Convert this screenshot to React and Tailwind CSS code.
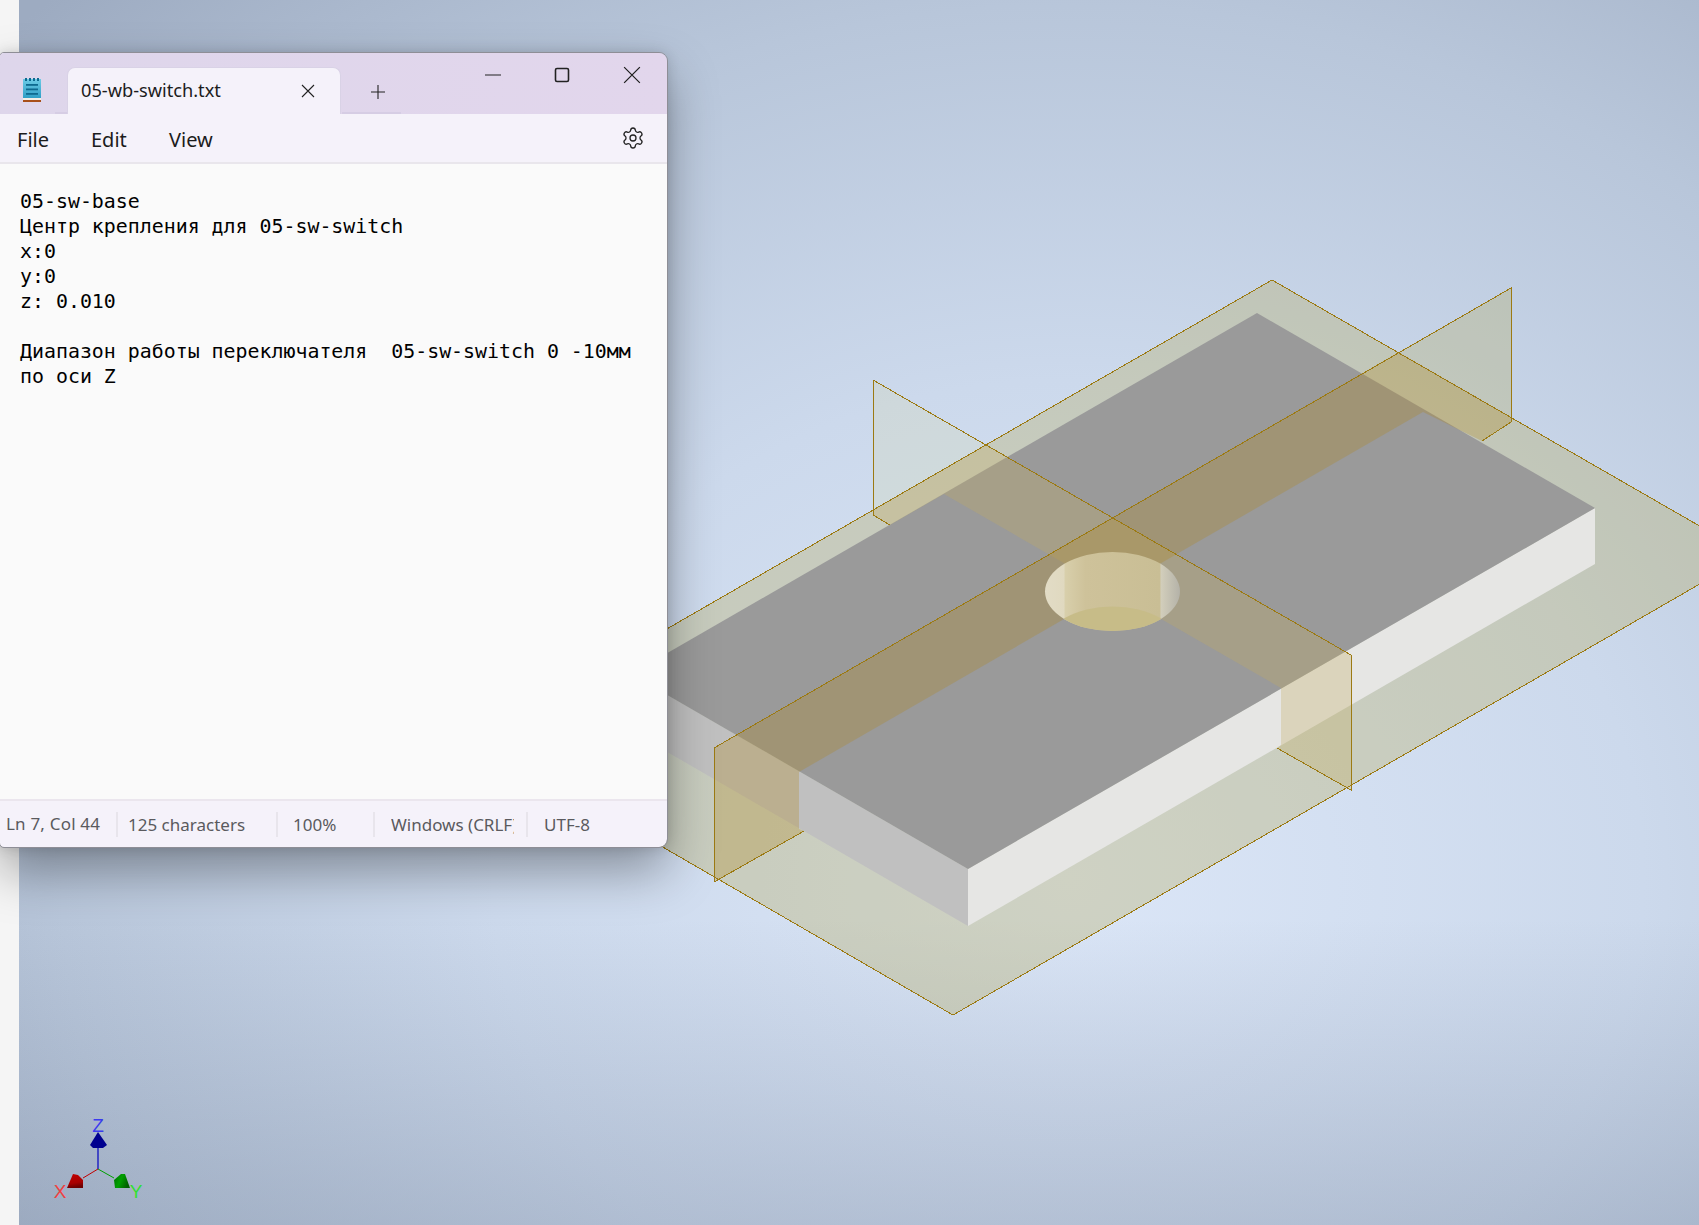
import React from "react";
import { Settings } from "lucide-react";

const scene = {
  base: "1272,280 1750,555 953,1015 476,739",
  top: "1257,313 1595,508 968,869 631,674",
  right: "1595,508 1595,564 968,926 968,869",
  left: "631,674 968,869 968,926 631,731",
  planeAIn: "714,748 1399,352 1511,417 1511,422 1482,441 1423,412 799,772 799,829 804,831 714,882",
  planeAOut: "1399,352 1511,288 1511,417",
  planeBIn: "986,445 1351,655 1351,790 1277,748 1281,745 1281,688 944,494 890,525 873,515 873,510",
  planeBOut: "873,380 986,445 873,510",
};

function Scene() {
  return (
    <svg className="absolute inset-0" width="1699" height="1225" viewBox="0 0 1699 1225">
      <defs>
        <linearGradient id="wall" x1="1045" x2="1180" y1="0" y2="0" gradientUnits="userSpaceOnUse">
          <stop offset="0" stopColor="#e2dcc6" />
          <stop offset="0.14" stopColor="#e0d9c0" />
          <stop offset="0.15" stopColor="#d8cfab" />
          <stop offset="0.3" stopColor="#cec29a" />
          <stop offset="0.85" stopColor="#c9be95" />
          <stop offset="0.86" stopColor="#d2cebb" />
          <stop offset="1" stopColor="#b4b2a8" />
        </linearGradient>
        <clipPath id="hole">
          <ellipse cx="1112.5" cy="591.5" rx="67.5" ry="39.5" />
        </clipPath>
      </defs>
      <polygon points={scene.base} fill="rgb(183,170,92)" fillOpacity="0.33" />
      <polygon points={scene.right} fill="#e6e6e4" />
      <polygon points={scene.left} fill="#c0c0c0" />
      <polygon points={scene.top} fill="#9a9a9a" />
      <polygon points={scene.planeBIn} fill="rgb(196,172,96)" fillOpacity="0.3" />
      <polygon points={scene.planeBOut} fill="rgb(216,214,160)" fillOpacity="0.22" />
      <polygon points={scene.planeAIn} fill="rgb(174,137,34)" fillOpacity="0.3" />
      <polygon points={scene.planeAOut} fill="rgb(180,170,90)" fillOpacity="0.3" />
      <g fill="none" stroke="#9c7a12" strokeWidth="1" shapeRendering="crispEdges">
        <polygon points={scene.base} />
        <polyline points="1482,441 1511,422 1511,288 714,748 714,882 804,831" />
        <polyline points="890,525 873,515 873,380 1351,655 1351,790 1277,748" />
      </g>
      <ellipse cx="1112.5" cy="591.5" rx="67.5" ry="39.5" fill="url(#wall)" />
      <g clipPath="url(#hole)">
        <ellipse cx="1112.5" cy="646" rx="67.5" ry="39.5" fill="#c7bc88" />
      </g>
    </svg>
  );
}

function Gizmo() {
  return (
    <svg className="absolute inset-0" width="1699" height="1225" viewBox="0 0 1699 1225">
      <defs>
        <linearGradient id="red" x1="0" y1="0" x2="0.2" y2="1">
          <stop offset="0" stopColor="#c20000" />
          <stop offset="0.7" stopColor="#a80000" />
          <stop offset="1" stopColor="#6e0000" />
        </linearGradient>
        <linearGradient id="green" x1="0" y1="0" x2="1" y2="0.4">
          <stop offset="0" stopColor="#006e00" />
          <stop offset="0.5" stopColor="#00a000" />
          <stop offset="1" stopColor="#006000" />
        </linearGradient>
      </defs>
      <line x1="98" y1="1169" x2="98" y2="1146" stroke="#0000c0" strokeWidth="1.2" />
      <line x1="98" y1="1169" x2="83" y2="1178" stroke="#c00000" strokeWidth="1" />
      <line x1="98" y1="1169" x2="114" y2="1178" stroke="#00a000" strokeWidth="1" />
      <polygon points="98,1132 107,1145 103,1148 93,1148 90,1145" fill="#00008f" />
      <polygon points="73,1174 78,1175 83,1180 83,1188 67,1188" fill="url(#red)" />
      <polygon points="121,1174 125,1174 130,1188 115,1188 114,1180" fill="url(#green)" />
      <text x="98" y="1132" textAnchor="middle" fontFamily="Liberation Sans" fontSize="19" fill="#3a3aee">Z</text>
      <text x="60" y="1198" textAnchor="middle" fontFamily="Liberation Sans" fontSize="19" fill="#f04040">X</text>
      <text x="136" y="1198" textAnchor="middle" fontFamily="Liberation Sans" fontSize="19" fill="#30e030">Y</text>
    </svg>
  );
}

function NotepadIcon() {
  return (
    <svg width="18" height="24" viewBox="0 0 18 24" className="shrink-0">
      <defs>
        <linearGradient id="pad" x1="0" y1="0" x2="0" y2="1">
          <stop offset="0" stopColor="#6ccbe6" />
          <stop offset="1" stopColor="#2f9fc6" />
        </linearGradient>
      </defs>
      <rect x="0" y="1" width="18" height="19" fill="url(#pad)" />
      <rect x="0" y="20" width="18" height="2" fill="#f2eee6" />
      <rect x="0" y="22" width="18" height="2" fill="#a8501a" />
      <g fill="#0e6a90">
        <rect x="2" y="0" width="2" height="3" />
        <rect x="6" y="0" width="2" height="3" />
        <rect x="10" y="0" width="2" height="3" />
        <rect x="14" y="0" width="2" height="3" />
        <rect x="3" y="6" width="12" height="1.8" />
        <rect x="3" y="10.5" width="12" height="1.8" />
        <rect x="3" y="15" width="12" height="1.8" />
      </g>
    </svg>
  );
}

function Glyph({ children, className }) {
  return (
    <svg width="16" height="16" viewBox="0 0 16 16" fill="none" stroke="#222" strokeWidth="1.1" className={className}>
      {children}
    </svg>
  );
}

function Notepad() {
  return (
    <div className="absolute left-0 top-[53px] w-[667px] h-[794px] flex flex-col rounded-r-lg rounded-l-[4px] overflow-hidden shadow-[0_24px_50px_rgba(0,0,0,0.34),0_0_14px_rgba(0,0,0,0.16)] outline outline-1 outline-[#8e8e96] font-['Noto_Sans',sans-serif]">
      <div className="relative h-[61px] shrink-0 flex items-end bg-gradient-to-r from-[#ded6eb] to-[#e2d6ec]">
        <div className="self-start mt-[25px] ml-[23px]"><NotepadIcon /></div>
        <div className="ml-[26px] w-[274px] h-[47px] bg-[#f5f2fa] rounded-t-lg border border-b-0 border-[#d9d2e6] flex items-center pl-[13px] pr-[24px] shrink-0">
          <span className="flex-1 text-[18.2px] leading-none text-[#1c1c1c] -translate-y-px">05-wb-switch.txt</span>
          <Glyph><path d="M2 2 14 14M14 2 2 14" /></Glyph>
        </div>
        <div className="ml-[29px] mb-[14px] shrink-0">
          <Glyph><path d="M8 1v14M1 8h14" /></Glyph>
        </div>
        <div className="flex-1 flex self-start justify-end items-center gap-[53px] pt-[13px] pr-[26px]">
          <Glyph><path d="M0 8h16" /></Glyph>
          <Glyph className="w-[16px]"><rect x="1.5" y="1.5" width="13" height="13" rx="1.5" strokeWidth="1.6" /></Glyph>
          <Glyph className="w-[18px] h-[18px]"><path d="M1 1 15 15M15 1 1 15" /></Glyph>
        </div>
        <div className="absolute left-[55px] bottom-0 w-[12px] h-[2px] bg-[#d6cde4]" />
        <div className="absolute left-[342px] bottom-0 w-[59px] h-[2px] bg-[#d6cde4]" />
      </div>
      <div className="h-[50px] shrink-0 flex items-center bg-[#f5f2fa] border-b-2 border-[#e9e6ec] text-[20px] text-[#1c1c1c]">
        <span className="ml-[17px] w-[74px] pt-[4px]">File</span>
        <span className="w-[78px] pt-[4px]">Edit</span>
        <span className="pt-[4px]">View</span>
        <Settings className="ml-auto mr-[22px]" size={24} strokeWidth={1.3} color="#222" />
      </div>
      <div className="flex-1 bg-[#fafafa] pl-[20px] pt-[25px] text-[19.9px] leading-[25px] text-black whitespace-pre font-['DejaVu_Sans_Mono',monospace]">
        {"05-sw-base\nЦентр крепления для 05-sw-switch\nx:0\ny:0\nz: 0.010\n\nДиапазон работы переключателя  05-sw-switch 0 -10мм\nпо оси Z"}
      </div>
      <div className="h-[48px] shrink-0 flex items-center bg-[#f5f2fa] border-t-2 border-[#ebe6ee] text-[17px] text-[#5a5a5e]">
        <div className="w-[116px] pl-[6px] tracking-[0.2px] whitespace-nowrap">Ln 7, Col 44</div>
        <div className="w-[160px] pl-[10px] h-[25px] leading-[25px] border-l-2 border-[#e8e5ec] whitespace-nowrap">125 characters</div>
        <div className="w-[97px] pl-[15px] h-[25px] leading-[25px] border-l-2 border-[#e8e5ec]">100%</div>
        <div className="w-[153px] pl-[16px] h-[25px] leading-[25px] border-l-2 border-[#e8e5ec]">
          <div className="w-[123px] whitespace-nowrap overflow-hidden">Windows (CRLF)</div>
        </div>
        <div className="pl-[16px] h-[25px] leading-[25px] border-l-2 border-[#e8e5ec]">UTF-8</div>
      </div>
    </div>
  );
}

export default function App() {
  return (
    <div className="relative w-[1699px] h-[1225px] overflow-hidden flex">
      <div className="w-[19px] shrink-0 bg-[#f5f5f5]" />
      <div className="flex-1 bg-[linear-gradient(to_bottom,rgba(100,115,140,0)_75%,rgba(100,115,140,0.27)_100%),radial-gradient(ellipse_1437px_1250px_at_1050px_880px,#dbe6f7_0%,#ccd9ec_40%,#b8c6da_70%,#9dabc1_100%)]" />
      <Scene />
      <Gizmo />
      <Notepad />
    </div>
  );
}
